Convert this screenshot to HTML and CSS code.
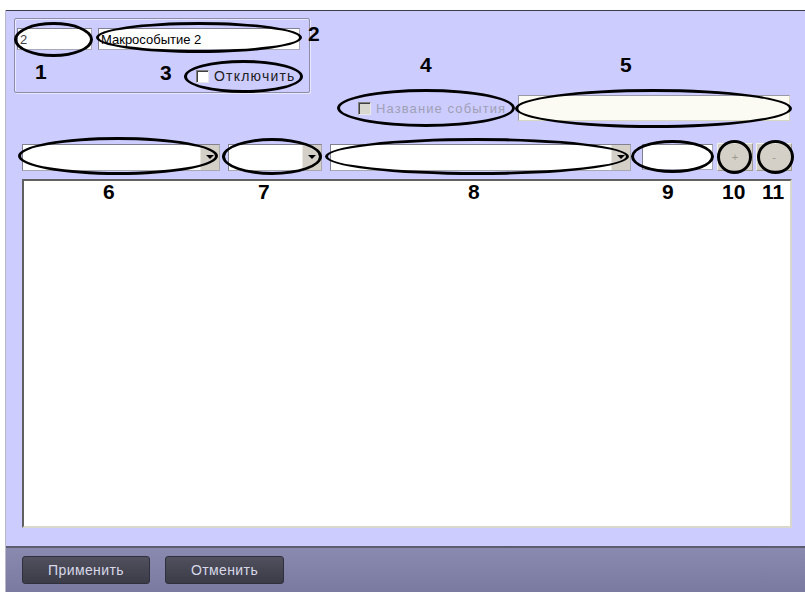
FILE: index.html
```html
<!DOCTYPE html>
<html lang="ru">
<head>
    <meta charset="UTF-8">
    <title>Макрособытие</title>
    <link rel="stylesheet" href="styles.css">
</head>
<body>
    <div class="window">
        <div class="panel">
            <!-- Macro id, name and disable flag -->
            <div class="group">
                <div class="group-row">
                    <input class="field field-id" type="text" value="2">
                    <input class="field field-name" type="text" value="Макрособытие 2">
                </div>
                <label class="check-line">
                    <span class="checkbox"></span>
                    <span>Отключить</span>
                </label>
            </div>

            <!-- Event name -->
            <div class="event-row">
                <label class="check-line disabled">
                    <span class="checkbox checkbox-disabled"></span>
                    <span>Название события</span>
                </label>
                <input class="field field-event" type="text" value="">
            </div>

            <!-- Filters -->
            <div class="filter-row">
                <div class="combo combo-type"><span class="combo-text"></span><span class="combo-btn"><i></i></span></div>
                <div class="combo combo-id"><span class="combo-text"></span><span class="combo-btn"><i></i></span></div>
                <div class="combo combo-action"><span class="combo-text"></span><span class="combo-btn"><i></i></span></div>
                <input class="field field-delay" type="text" value="">
                <button class="small-btn">+</button>
                <button class="small-btn">-</button>
            </div>

            <div class="list"></div>

            <!-- Annotation marks -->
            <span class="oval" style="left:8px;top:11px;width:79px;height:35px"></span>
            <span class="oval" style="left:90px;top:11px;width:206px;height:31px"></span>
            <span class="oval" style="left:178px;top:49px;width:119px;height:33px"></span>
            <span class="oval" style="left:331px;top:78px;width:178px;height:38px"></span>
            <span class="oval" style="left:509px;top:78px;width:277px;height:39px"></span>
            <span class="oval" style="left:12px;top:126px;width:200px;height:38px"></span>
            <span class="oval" style="left:216px;top:127px;width:100px;height:37px"></span>
            <span class="oval" style="left:319px;top:127px;width:304px;height:37px"></span>
            <span class="oval" style="left:625px;top:129px;width:83px;height:33px"></span>
            <span class="oval" style="left:711px;top:129px;width:35px;height:34px"></span>
            <span class="oval" style="left:751px;top:129px;width:37px;height:34px"></span>

            <span class="mark" style="left:29px;top:50px">1</span>
            <span class="mark" style="left:302px;top:12px">2</span>
            <span class="mark" style="left:154px;top:51px">3</span>
            <span class="mark" style="left:414px;top:43px">4</span>
            <span class="mark" style="left:614px;top:43px">5</span>
            <span class="mark" style="left:97px;top:170px">6</span>
            <span class="mark" style="left:252px;top:170px">7</span>
            <span class="mark" style="left:462px;top:170px">8</span>
            <span class="mark" style="left:656px;top:170px">9</span>
            <span class="mark" style="left:716px;top:170px">10</span>
            <span class="mark" style="left:756px;top:170px">11</span>
        </div>

        <div class="footer">
            <button class="footer-btn btn-apply">Применить</button>
            <button class="footer-btn btn-cancel">Отменить</button>
        </div>
    </div>
</body>
</html>
```

FILE: styles.css
```css
* {
    margin: 0;
    padding: 0;
    box-sizing: border-box;
}

body {
    background-color: #ffffff;
    font-family: 'Liberation Sans', Arial, sans-serif;
    font-size: 12px;
    color: #000;
    width: 805px;
    height: 592px;
    overflow: hidden;
}

.window {
    margin: 10px 0 0 5px;
    height: 582px;
    display: flex;
    flex-direction: column;
    border-left: 1px solid #b8b8c8;
}

/* Main lavender panel */
.panel {
    position: relative;
    flex: 1;
    background-color: #ccccff;
    border-top: 1px solid #3c3c50;
    padding: 7px 0 0 8px;
}

.group {
    width: 296px;
    height: 75px;
    border: 1px solid #8c8ca8;
    box-shadow: inset 1px 1px 0 #e8e8ff, 1px 1px 0 #e8e8ff;
    border-radius: 2px;
    padding: 9px 0 0 2px;
}

.group-row {
    display: flex;
    gap: 6px;
}

.field {
    height: 22px;
    background-color: #ffffff;
    border: 1px solid #a8a8b8;
    border-top-color: #808090;
    border-left-color: #808090;
    font-family: 'Liberation Sans', Arial, sans-serif;
    font-size: 13px;
    padding: 0 2px;
    outline: none;
}

.field-id {
    width: 75px;
    color: #404040;
}

.field-name {
    width: 202px;
}

.check-line {
    flex: none;
    display: flex;
    align-items: center;
    gap: 5px;
    color: #202020;
    font-size: 14px;
    font-weight: normal;
    letter-spacing: 1.2px;
}

.group .check-line {
    margin: 18px 0 0 179px;
}

.checkbox {
    flex: none;
    width: 13px;
    height: 13px;
    background-color: #ffffff;
    border: 1px solid #808080;
    border-right-color: #e8e8e8;
    border-bottom-color: #e8e8e8;
    box-shadow: inset 1px 1px 0 #404040;
}

.check-line.disabled {
    color: #a0a0b4;
    font-size: 13px;
    letter-spacing: 1.1px;
}

.checkbox-disabled {
    background-color: #d8d8d0;
}

.event-row {
    display: flex;
    align-items: center;
    margin: 2px 0 0 344px;
    padding-right: 15px;
}

.field-event {
    width: 272px;
    height: 26px;
    margin-left: auto;
    background-color: #fbfbf4;
    border-color: #d8d8c0;
    border-top-color: #9898a8;
    border-left-color: #9898a8;
}

/* Filter row */
.filter-row {
    display: flex;
    align-items: center;
    margin: 22px 0 0 8px;
}

.combo {
    height: 27px;
    display: flex;
    background-color: #ffffff;
    border: 1px solid #a8a8b0;
    border-top-color: #808090;
    border-left-color: #808090;
}

.combo-text {
    flex: 1;
}

.combo-btn {
    width: 19px;
    background-color: #d4d0c8;
    border-left: 1px solid #e8e8e0;
    display: flex;
    align-items: center;
    justify-content: center;
}

.combo-btn i {
    width: 0;
    height: 0;
    border-left: 4px solid transparent;
    border-right: 4px solid transparent;
    border-top: 4px solid #000;
}

.combo-type {
    width: 198px;
}

.combo-id {
    width: 94px;
    margin-left: 8px;
}

.combo-action {
    width: 301px;
    margin-left: 8px;
}

.field-delay {
    width: 71px;
    height: 26px;
    margin-left: 11px;
}

.small-btn {
    width: 36px;
    height: 28px;
    margin-left: 4px;
    background-color: #d4d0c8;
    border: 1px solid #a09c94;
    border-top-color: #f0f0ea;
    border-left-color: #f0f0ea;
    color: #9a968e;
    font-family: 'Liberation Sans', Arial, sans-serif;
    font-size: 11px;
}

.small-btn + .small-btn {
    margin-left: 3px;
}

.list {
    width: 770px;
    height: 349px;
    margin: 8px 0 0 8px;
    background-color: #ffffff;
    border: 2px solid #d8d8cc;
    border-top-color: #606060;
    border-left-color: #606060;
}

/* Annotation overlays */
.oval {
    position: absolute;
    border: 3px solid #000;
    border-radius: 50%;
}

.mark {
    position: absolute;
    font-family: 'Liberation Sans', Arial, sans-serif;
    font-weight: bold;
    font-size: 21px;
    line-height: 22px;
    color: #000;
}

/* Bottom bar */
.footer {
    height: 46px;
    border-top: 2px solid #5c5c70;
    background: linear-gradient(to bottom, #8a8ab0, #7a7aa0);
    display: flex;
    align-items: center;
    padding: 0 0 0 16px;
    gap: 15px;
}

.footer-btn {
    height: 28px;
    border: 1px solid #30303c;
    border-radius: 3px;
    background: linear-gradient(to bottom, #50505e, #3c3c48);
    color: #d8d8e8;
    font-family: 'Liberation Sans', Arial, sans-serif;
    font-size: 14px;
    letter-spacing: 0.4px;
}

.btn-apply {
    width: 128px;
}

.btn-cancel {
    width: 119px;
}
```
